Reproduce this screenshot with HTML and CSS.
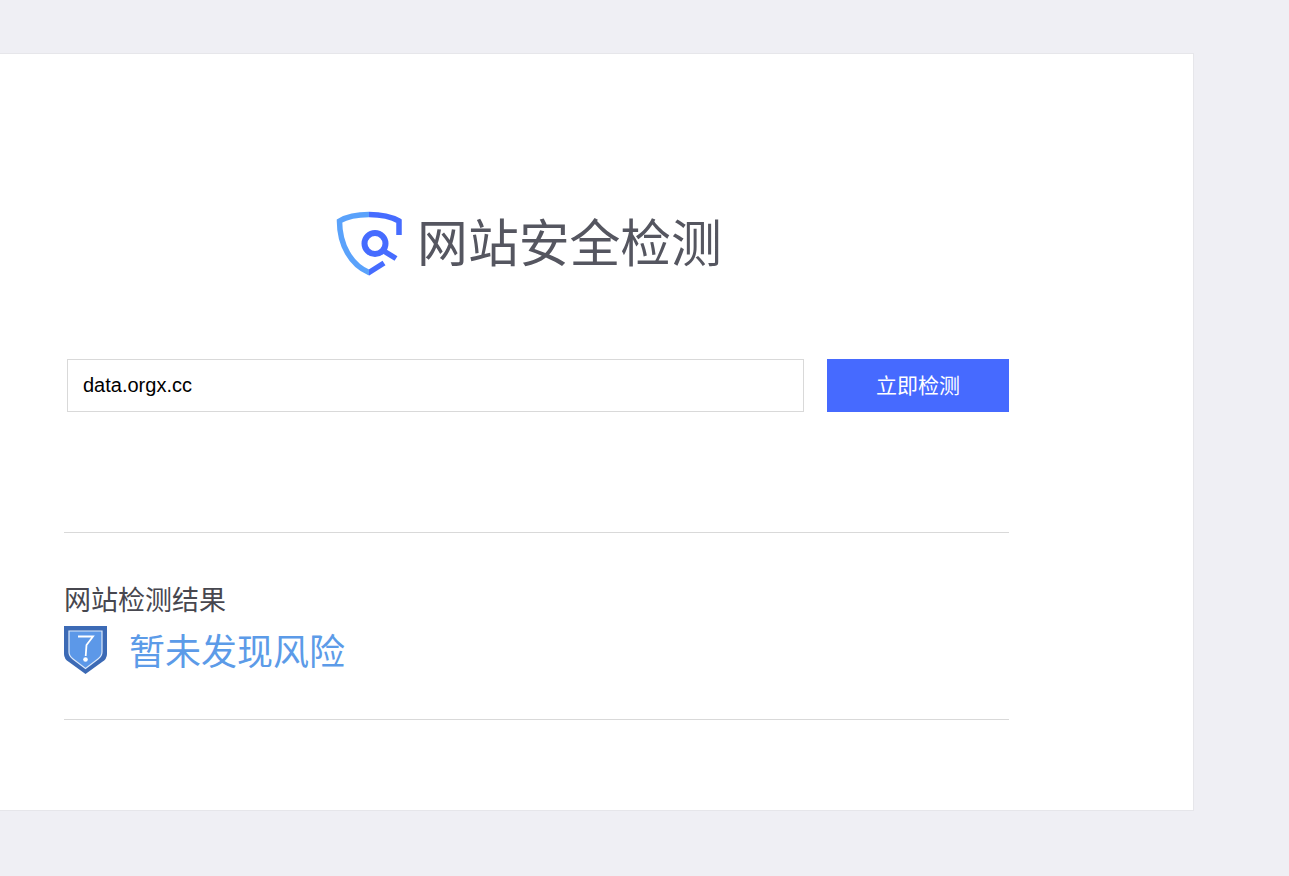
FILE: index.html
```html
<!DOCTYPE html>
<html lang="zh-CN">
<head>
<meta charset="utf-8">
<title>网站安全检测</title>
<link rel="stylesheet" href="styles.css">
</head>
<body>
<main class="card">
  <div class="column">
    <div class="logo">
      <svg class="logo-icon" width="66" height="66" viewBox="0 0 66 66" fill="none">
        <defs>
          <linearGradient id="sh" x1="0" y1="0" x2="1" y2="0">
            <stop offset="0" stop-color="#5aa2fb"/>
            <stop offset="0.49" stop-color="#5aa2fb"/>
            <stop offset="0.5" stop-color="#466cff"/>
            <stop offset="1" stop-color="#466cff"/>
          </linearGradient>
        </defs>
        <path d="M63 24V10C55 5.500 45 3.500 33 3.500C21 3.500 11 5.500 3.500 10C3.500 34 15 54 33 61.500L48 52" stroke="url(#sh)" stroke-width="5.500"/>
        <circle cx="39" cy="32.500" r="10.500" stroke="#466cff" stroke-width="6"/>
        <path d="M47 39.500L60 47.500" stroke="#466cff" stroke-width="5.500"/>
      </svg>
      <span class="logo-text">网站安全检测</span>
    </div>
    <form class="search">
      <input class="search-input" type="text" value="data.orgx.cc">
      <button class="search-button" type="button">立即检测</button>
    </form>
    <section class="result">
      <h2 class="result-title">网站检测结果</h2>
      <div class="result-row">
        <svg class="result-icon" width="43" height="48" viewBox="0 0 43 48">
          <path d="M0 0H43V28Q43 33 38 36L21.500 48L5 36Q0 33 0 28Z" fill="#3c6ab5"/>
          <path d="M5 5H38V26Q38 30 34 33L21.500 42.500L9 33Q5 30 5 26Z" fill="#5c98e8" stroke="#dce9fa" stroke-width="1.200"/>
          <path d="M14 10.500H29L22.500 19L21.700 30" fill="none" stroke="#fff" stroke-width="1.800"/>
          <circle cx="21.500" cy="33.500" r="2.300" fill="#fff"/>
        </svg>
        <span class="result-text">暂未发现风险</span>
      </div>
    </section>
  </div>
</main>
</body>
</html>
```
FILE: styles.css
```css
* {
  box-sizing: border-box;
}

html,
body {
  margin: 0;
  height: 876px;
  overflow: hidden;
}

body {
  background: #efeff4;
  padding-top: 53px;
  font-family: "Liberation Sans", "Noto Sans CJK SC", sans-serif;
}

.card {
  width: 1195px;
  height: 758px;
  margin-left: -1px;
  background: #fff;
  border: 1px solid #e6e6ea;
  padding-left: 64px;
}

.column {
  width: 945px;
  display: flex;
  flex-direction: column;
}

.logo {
  display: flex;
  align-items: center;
  justify-content: center;
  gap: 15px;
  height: 66px;
  margin-top: 157px;
  padding-right: 15px;
}

.logo-icon {
  flex: none;
}

.logo-text {
  font-size: 50.800px;
  line-height: 66px;
  color: #555660;
  white-space: nowrap;
  padding-top: 1px;
}

.search {
  display: flex;
  justify-content: space-between;
  margin: 82px 0 0 3px;
}

.search-input {
  width: 737px;
  height: 53px;
  border: 1px solid #d9d9d9;
  padding: 0 15px;
  font: 20px "Liberation Sans", sans-serif;
  color: #000;
  background: #fff;
  outline: none;
}

.search-button {
  width: 182px;
  height: 53px;
  border: 0;
  background: #466aff;
  color: #fff;
  font: 21px "Noto Sans CJK SC", sans-serif;
  padding: 0 0 3px;
}

.result {
  margin-top: 120px;
  height: 188px;
  border-top: 1px solid #d9d9d9;
  border-bottom: 1px solid #d9d9d9;
  padding-top: 51px;
}

.result-title {
  margin: 0;
  font-size: 27px;
  line-height: 34px;
  font-weight: 400;
  color: #47474f;
}

.result-row {
  display: flex;
  align-items: flex-start;
  gap: 22px;
  margin-top: 8px;
}

.result-icon {
  flex: none;
}

.result-text {
  font-size: 36px;
  line-height: 48px;
  color: #5c9be8;
  padding-top: 3px;
}
```
